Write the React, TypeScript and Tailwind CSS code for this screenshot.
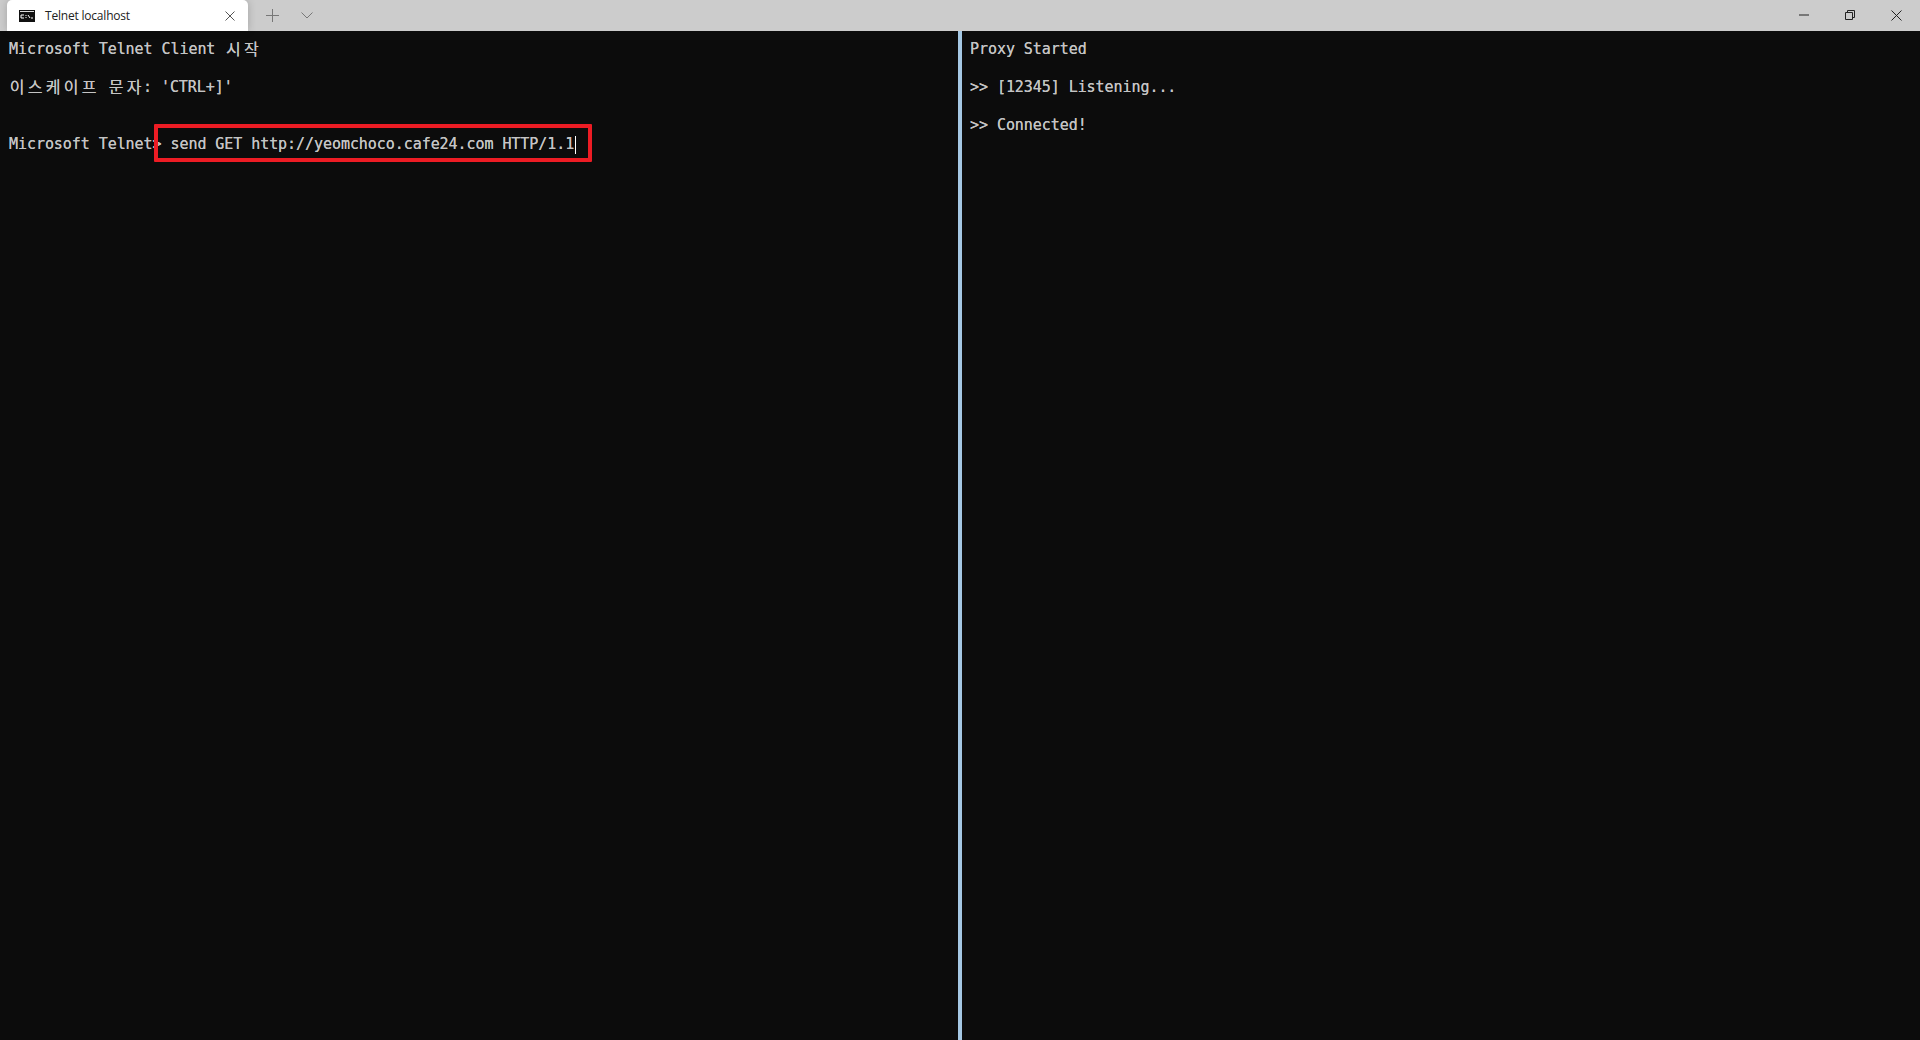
import React from 'react';

// hangul takes two terminal cells, so each syllable gets its own fixed box
function Wide({ text }: { text: string }) {
  return (
    <>
      {text.split('').map((c, i) => (
        <span key={i} className="inline-block h-[15px] w-[18px] text-center align-[-1px] font-['Noto_Sans_CJK_KR',sans-serif] text-[16px] leading-[15px]">
          {c}
        </span>
      ))}
    </>
  );
}

function Row({ children }: { children?: React.ReactNode }) {
  return <div className="h-[19px] overflow-visible whitespace-pre leading-[19px]">{children}</div>;
}

export default function App() {
  return (
    <div className="flex h-[1040px] w-[1920px] flex-col overflow-hidden bg-[#0c0c0c] font-['DejaVu_Sans_Mono',monospace] text-[15px] tracking-[-0.06px] text-[#c4c4c4] [text-shadow:0_0_0.5px_#c4c4c4]">
      {/* title bar */}
      <div className="flex h-[31px] items-end bg-[#cccccc] pl-[7px] [text-shadow:none]">
        <div className="flex h-[31px] w-[241px] items-center rounded-t-[5px] bg-white pl-[12px] pr-[13px] shadow-[0_0_8px_rgba(0,0,0,0.2)]">
          <svg width="16" height="12" viewBox="0 0 16 12" className="mr-[10px]">
            <rect width="16" height="12" fill="#111" />
            <rect x="1" y="1" width="14" height="1" fill="#ddd" />
            <path d="M2 5h3M2 5v3M2 8h3M7 5v1M7 7v1M9 5l2 3M12 8h2" stroke="#fff" strokeWidth="1" fill="none" />
          </svg>
          <span className="flex-1 font-['Open_Sans',sans-serif] text-[12px] tracking-[-0.2px] text-[#222]">Telnet localhost</span>
          <svg width="10" height="10" viewBox="0 0 10 10">
            <path d="M0.5 0.5l9 9M9.5 0.5l-9 9" stroke="#555" strokeWidth="1" />
          </svg>
        </div>
        <div className="flex h-[31px] items-center">
          <svg width="13" height="13" viewBox="0 0 13 13" className="ml-[18px]">
            <path d="M6.5 0v13M0 6.5h13" stroke="#777" strokeWidth="1" />
          </svg>
          <svg width="12" height="7" viewBox="0 0 12 7" className="ml-[22px]">
            <path d="M0.5 0.5l5.5 5.5l5.5-5.5" stroke="#777" strokeWidth="1" fill="none" />
          </svg>
        </div>
        <div className="ml-auto flex h-[30px] items-center self-start">
          <svg width="10" height="2" viewBox="0 0 10 2" className="mr-[36px]">
            <path d="M0 1h10" stroke="#222" strokeWidth="1" />
          </svg>
          <svg width="10" height="10" viewBox="0 0 10 10" className="mr-[36px]">
            <path d="M0.5 2.5h7v7h-7zM2.5 2.5v-2h7v7h-2" stroke="#222" strokeWidth="1" fill="none" />
          </svg>
          <svg width="11" height="11" viewBox="0 0 11 11" className="mr-[18px]">
            <path d="M0.5 0.5l10 10M10.5 0.5l-10 10" stroke="#222" strokeWidth="1" />
          </svg>
        </div>
      </div>
      {/* panes */}
      <div className="flex flex-1">
        <div className="relative w-[958px] pl-[9px] pt-[9px]">
          <Row>Microsoft Telnet Client <Wide text="시작" /></Row>
          <Row />
          <Row><span className="-ml-px"><Wide text="이스케이프" /> <Wide text="문자" /></span>: 'CTRL+]'</Row>
          <Row />
          <Row />
          <Row>Microsoft Telnet&gt; send GET http://yeomchoco.cafe24.com HTTP/1.1</Row>
          {/* annotation + cursor */}
          <div className="absolute left-[154px] top-[93px] h-[38px] w-[438px] rounded-[1px] border-4 border-[#ed1c24]" />
          <div className="absolute left-[575px] top-[105px] h-[18px] w-px bg-white" />
        </div>
        <div className="w-[4px] bg-[#a5c8e4]" />
        <div className="flex-1 pl-[8px] pt-[9px]">
          <Row>Proxy Started</Row>
          <Row />
          <Row>&gt;&gt; [12345] Listening...</Row>
          <Row />
          <Row>&gt;&gt; Connected!</Row>
        </div>
      </div>
    </div>
  );
}
